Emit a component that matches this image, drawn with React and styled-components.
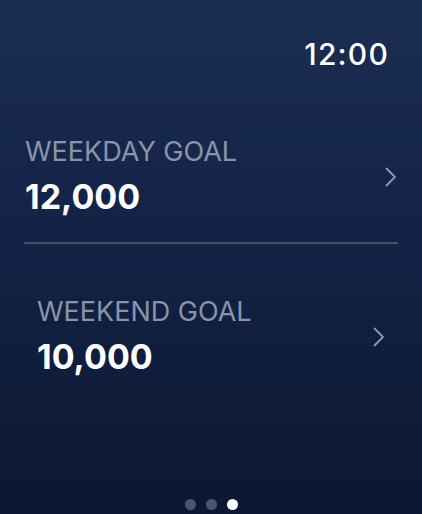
import styled, { createGlobalStyle } from "styled-components"

const Global = createGlobalStyle`
    html, body {
        margin: 0;
        padding: 0;
        background: #0c1832;
    }
    * { box-sizing: border-box; }
`

const goals = [
    { label: "WEEKDAY GOAL", value: "12,000", inset: 0, divider: true },
    { label: "WEEKEND GOAL", value: "10,000", inset: 12, divider: false },
]

function Chevron() {
    return (
        <svg width="14" height="20" viewBox="0 0 14 20" fill="none">
            <path d="M2.5 1.5 L11 10 L2.5 18.5" stroke="#8d97ad" strokeWidth="1.8" strokeLinecap="round" strokeLinejoin="round" />
        </svg>
    )
}

export default function App() {
    return (
        <>
            <Global />
            <Screen>
                <Header>
                    <Time>12:00</Time>
                </Header>
                <List>
                    {goals.map((g) => (
                        <Row key={g.label} $inset={g.inset} $divider={g.divider}>
                            <Texts>
                                <Label>{g.label}</Label>
                                <Value>{g.value}</Value>
                            </Texts>
                            <Chevron />
                        </Row>
                    ))}
                </List>
                <Dots>
                    <Dot />
                    <Dot />
                    <Dot $active />
                </Dots>
            </Screen>
        </>
    )
}

const Screen = styled.div`
    width: 422px;
    height: 514px;
    background: linear-gradient(180deg, #1b2d50 0%, #132448 40%, #0c1832 100%);
    display: flex;
    flex-direction: column;
    font-family: Inter, "Noto Sans", sans-serif;
    overflow: hidden;
`
const Header = styled.div`
    display: flex;
    justify-content: flex-end;
    padding: 37px 33px 0 0;
    height: 112px;
`
const Time = styled.span`
    font-size: 30px;
    line-height: 34px;
    color: #ffffff;
    font-weight: 500;
    letter-spacing: 1.2px;
`
const List = styled.div`
    display: flex;
    flex-direction: column;
    padding: 0 24px;
    flex: 1;
`
const Row = styled.div`
    display: flex;
    align-items: center;
    justify-content: space-between;
    padding: 24px ${(p) => p.$inset}px 25px ${(p) => 1 + p.$inset}px;
    border-bottom: ${(p) => (p.$divider ? "2.5px solid #434f69" : "none")};
    margin-bottom: ${(p) => (p.$divider ? "28px" : "0")};
`
const Texts = styled.div`
    display: flex;
    flex-direction: column;
    gap: 9px;
`
const Label = styled.span`
    font-size: 27px;
    line-height: 32px;
    color: #8a93a8;
    font-weight: 400;
`
const Value = styled.span`
    font-size: 34px;
    line-height: 40px;
    color: #ffffff;
    font-weight: 700;
`
const Dots = styled.div`
    display: flex;
    justify-content: center;
    gap: 10px;
    padding-bottom: 4px;
`
const Dot = styled.div`
    width: 11px;
    height: 11px;
    border-radius: 50%;
    background: ${(p) => (p.$active ? "#ffffff" : "#4c5570")};
`
